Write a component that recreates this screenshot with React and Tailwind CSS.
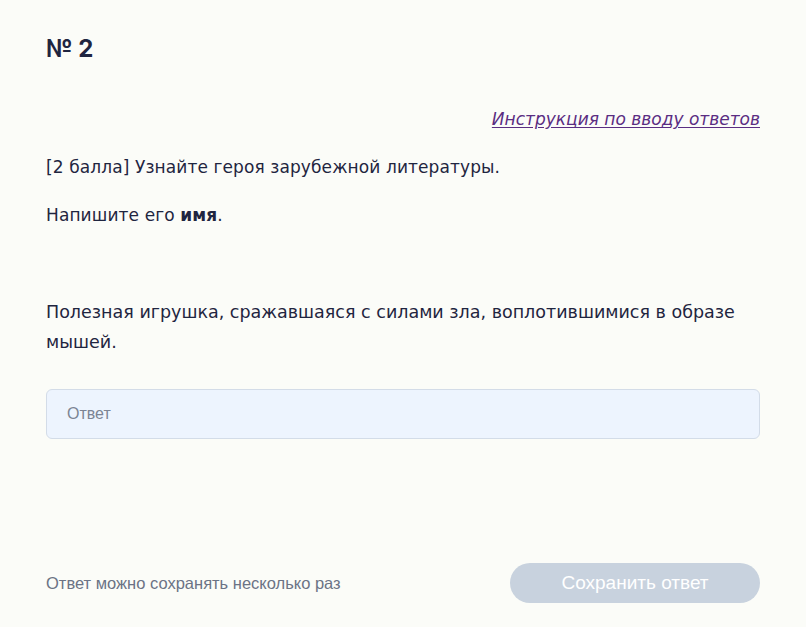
export default function App() {
  return (
    <div className="min-h-[627px] bg-[#fbfcf8] px-[46px] pt-[34px] pb-[24px] flex flex-col font-['DejaVu_Sans',sans-serif] text-[#1f2540]">
      <h1 className="text-[24px] font-bold leading-[30px] font-['Inter',sans-serif]">№ 2</h1>

      <div className="flex justify-end mt-[43px]">
        <a href="#" className="italic text-[17px] leading-[24px] text-[#5a2d82] underline underline-offset-2">
          Инструкция по вводу ответов
        </a>
      </div>

      <p className="mt-[24px] text-[17px] leading-[24px] tracking-[0.1px]">
        [2 балла] Узнайте героя зарубежной литературы.
      </p>
      <p className="mt-[24px] text-[17px] leading-[24px] tracking-[0.1px]">
        Напишите его <b>имя</b>.
      </p>

      <p className="mt-[70px] text-[17.5px] leading-[30px]">
        Полезная игрушка, сражавшаяся с силами зла, воплотившимися в образе мышей.
      </p>

      <input
        placeholder="Ответ"
        className="mt-[32px] h-[50px] w-full rounded-[6px] border border-[#d3dce8] bg-[#edf4fe] px-[20px] text-[16px] font-['Liberation_Sans',sans-serif] placeholder:text-[#7c8494] outline-none"
      />

      <div className="mt-auto flex items-center justify-between">
        <span className="text-[16.5px] text-[#6b7385] font-['Liberation_Sans',sans-serif]">
          Ответ можно сохранять несколько раз
        </span>
        <button className="h-[40px] w-[250px] rounded-full bg-[#c8d2de] text-[19px] text-white font-['Liberation_Sans',sans-serif]">
          Сохранить ответ
        </button>
      </div>
    </div>
  );
}
